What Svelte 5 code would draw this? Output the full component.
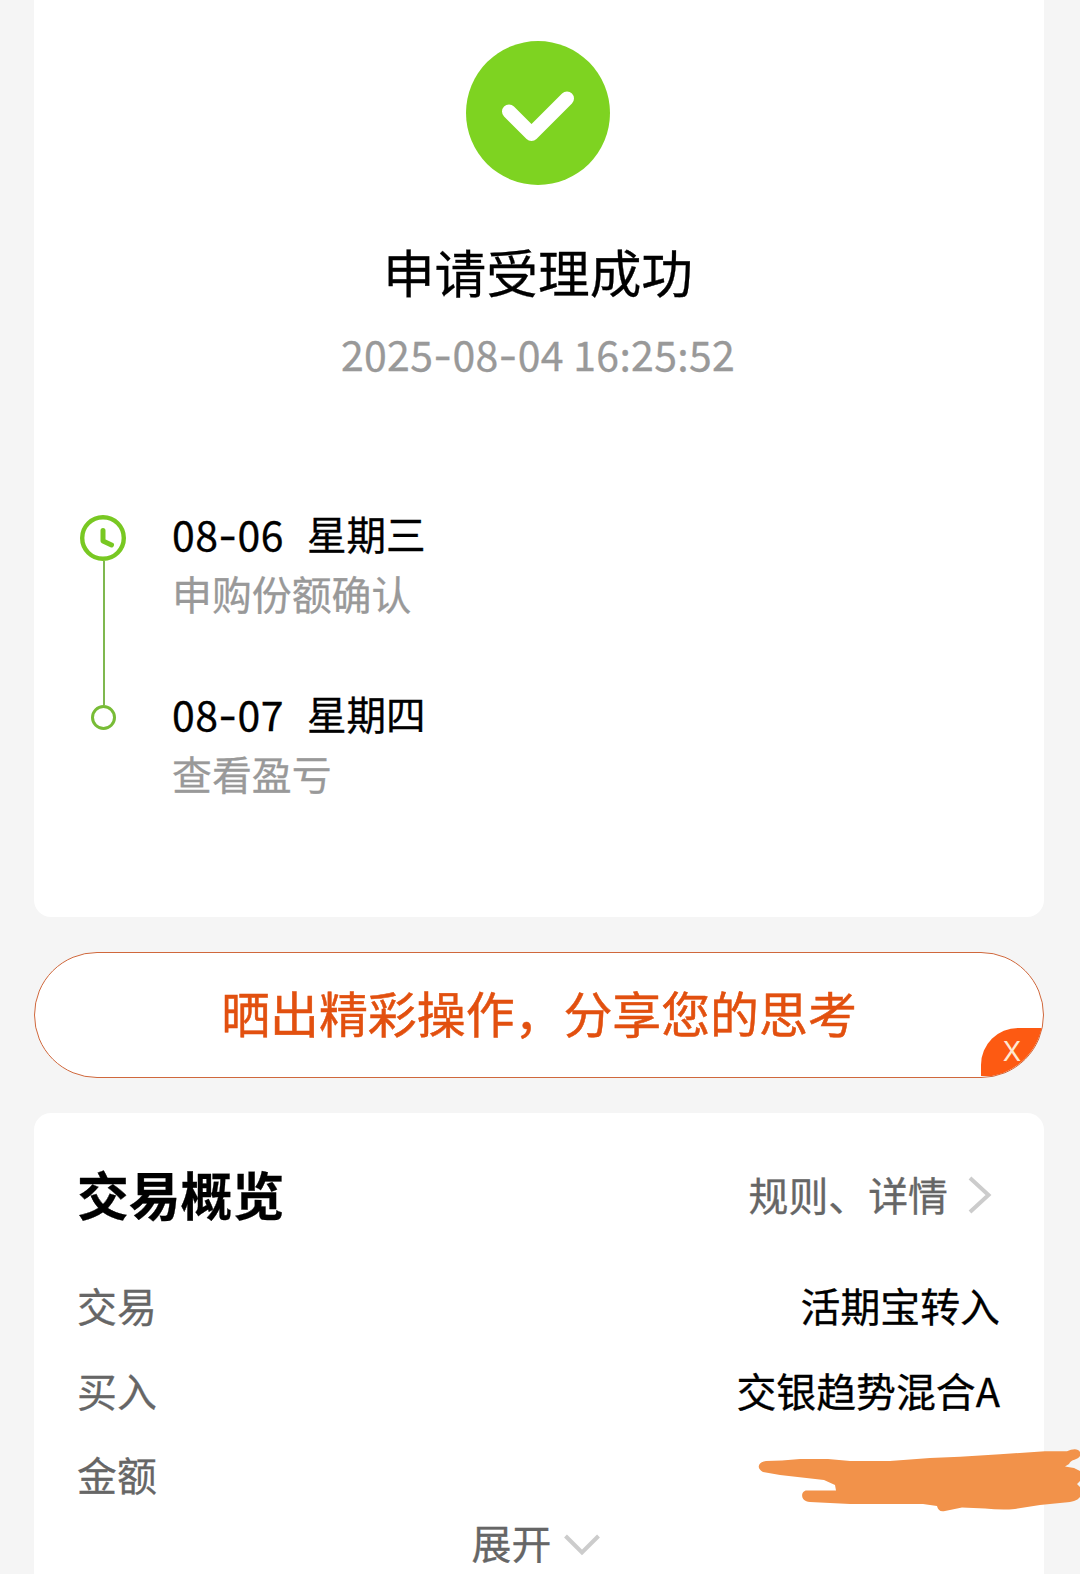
<script lang="ts">
	const result = {
		title: '申请受理成功',
		time: '2025-08-04 16:25:52'
	};

	const steps = [
		{ date: '08-06', day: '星期三', text: '申购份额确认' },
		{ date: '08-07', day: '星期四', text: '查看盈亏' }
	];

	const rows = [
		{ label: '交易', value: '活期宝转入' },
		{ label: '买入', value: '交银趋势混合A' },
		{ label: '金额', value: '' }
	];
</script>

{#snippet digits(value)}
	{#each value.split('-') as part, i}{#if i > 0}<span class="dash">-</span>{/if}{part}{/each}
{/snippet}

<div class="page">
	<section class="card result">
		<svg class="success" viewBox="0 0 144 144">
			<circle cx="72" cy="72" r="72" fill="#7ed321" />
			<path d="M43 70.5 65.500 93 101 57.500" fill="none" stroke="#fff" stroke-width="14" stroke-linecap="round" stroke-linejoin="round" />
		</svg>
		<h1>{result.title}</h1>
		<div class="time">{@render digits(result.time)}</div>

		<div class="timeline">
			<div class="rail">
				<svg class="clock" viewBox="0 0 46 46">
					<circle cx="23" cy="23" r="20.800" fill="none" stroke="#78c822" stroke-width="4.400" />
					<path d="M23 15.500V26L31.500 30" fill="none" stroke="#78c822" stroke-width="5" stroke-linecap="round" stroke-linejoin="round" />
				</svg>
				<div class="line"></div>
				<div class="dot"></div>
			</div>
			<div class="steps">
				{#each steps as step}
					<div class="step">
						<div class="when">
							<span class="date">{@render digits(step.date)}</span>
							<span>{step.day}</span>
						</div>
						<div class="what">{step.text}</div>
					</div>
				{/each}
			</div>
		</div>
	</section>

	<div class="share">
		<span>晒出精彩操作，分享您的思考</span>
		<div class="close">X</div>
	</div>

	<section class="card overview">
		<div class="head">
			<h2>交易概览</h2>
			<div class="more">
				<span>规则、详情</span>
				<svg width="24" height="38" viewBox="0 0 24 38">
					<path d="M2 2 20.500 19 2 36" fill="none" stroke="#ccc" stroke-width="4" />
				</svg>
			</div>
		</div>
		{#each rows as row}
			<div class="row">
				<span class="label">{row.label}</span>
				<span>{row.value}</span>
			</div>
		{/each}
		<div class="expand">
			<span>展开</span>
			<svg width="36" height="22" viewBox="0 0 36 22">
				<path d="M1.500 2 18 18.500 34.500 2" fill="none" stroke="#ccc" stroke-width="4" />
			</svg>
		</div>
	</section>

	<!-- marker stroke hiding the amount -->
	<svg class="scribble" viewBox="0 0 340 90">
		<path
			d="M26 31 42 30.500 60 29H88L110 31H150L190 28 220 26.700 260 24.300 305 21.300H327C332 19 338 18 340 22V26C338 30 331 29 329 34L325 36.500 334 38 340 41V51L337 54 340 57V67C337 71 332 72 325 72.500L300 75 275 79C265 80 255 79.500 245 78.500L222 77.500 205 81C200 82 198 80 197 76L183 74H110L70 72C59 71 61 60 67 60.500H96L95 55 84 50 40 45 23 42C16 38 18 32 26 31Z"
			fill="#f2924a"
		/>
	</svg>
</div>

<style>
	:global(body) {
		background: #f5f5f5;
		overflow: hidden;
	}
	.page {
		position: relative;
		box-sizing: border-box;
		width: 1080px;
		height: 1574px;
		padding: 0 36px 0 34px;
		overflow: hidden;
		background: #f5f5f5;
		color: #000;
		font-family: 'Noto Sans CJK SC', sans-serif;
		font-size: 39.9px;
		white-space: nowrap;
		-webkit-text-stroke: 0.3px;
	}
	.card {
		box-sizing: border-box;
		background: #fff;
	}
	.result {
		height: 917px;
		padding: 41px 48px 0 46px;
		border-radius: 0 0 17px 17px;
		display: flex;
		flex-direction: column;
		align-items: center;
	}
	.success {
		width: 144px;
		height: 144px;
		flex: none;
	}
	h1 {
		margin: 56px 0 0;
		font-size: 51.7px;
		font-weight: 400;
		line-height: 60px;
	}
	.time {
		margin-top: 27px;
		font-size: 41px;
		line-height: 50px;
		letter-spacing: 0.3px;
		color: #999;
	}
	.dash {
		font-family: Inter, sans-serif;
		line-height: 1;
	}
	.timeline {
		align-self: stretch;
		display: flex;
		gap: 46px;
		margin-top: 125px;
	}
	.rail {
		width: 46px;
		height: 215px;
		margin-top: 12px;
		display: flex;
		flex-direction: column;
		align-items: center;
	}
	.clock {
		width: 46px;
		height: 46px;
		flex: none;
	}
	.line {
		width: 2px;
		margin-left: 2px;
		flex: 1;
		background: #7fb84f;
	}
	.dot {
		box-sizing: border-box;
		width: 25px;
		height: 25px;
		border: 3px solid #78bc36;
		border-radius: 50%;
	}
	.steps {
		display: flex;
		flex-direction: column;
		gap: 60px;
	}
	.when {
		display: flex;
		gap: 23px;
		font-size: 39.6px;
		line-height: 60px;
	}
	.date {
		font-size: 41px;
		letter-spacing: 0.4px;
	}
	.what {
		line-height: 60px;
		color: #999;
	}
	.share {
		position: relative;
		box-sizing: border-box;
		height: 126px;
		margin: 35px 0;
		padding-bottom: 6px;
		border: 1px solid #d0683c;
		border-radius: 63px;
		overflow: hidden;
		background: #fff;
		color: #e2500f;
		display: flex;
		align-items: center;
		justify-content: center;
		font-size: 48.9px;
		line-height: 60px;
		-webkit-text-stroke: 0.5px;
	}
	.close {
		position: absolute;
		right: 0;
		bottom: 1px;
		width: 62px;
		height: 48px;
		border-radius: 37px 0 0 0;
		background: #fd5a12;
		color: #ffe9d2;
		font-family: Inter, sans-serif;
		font-size: 27px;
		line-height: 48px;
		text-align: center;
		-webkit-text-stroke: 0;
	}
	.overview {
		height: 480px;
		padding: 46px 44px 0 43px;
		border-radius: 17px 17px 0 0;
	}
	.head {
		height: 70px;
		margin-bottom: 34px;
		display: flex;
		align-items: center;
		justify-content: space-between;
	}
	h2 {
		margin: 0;
		font-size: 51.8px;
		font-weight: 700;
		line-height: 70px;
	}
	.more {
		display: flex;
		align-items: center;
		gap: 20px;
		padding-right: 8px;
		line-height: 70px;
		color: #666;
	}
	.more svg {
		margin-top: 2px;
	}
	.row {
		display: flex;
		justify-content: space-between;
		height: 84.7px;
		line-height: 84.7px;
	}
	.label {
		color: #666;
	}
	.expand {
		display: flex;
		align-items: center;
		justify-content: center;
		gap: 13px;
		padding-right: 5px;
		line-height: 50px;
		color: #666;
	}
	.expand svg {
		margin-top: 5px;
	}
	.scribble {
		position: absolute;
		left: 740px;
		top: 1430px;
		width: 340px;
		height: 90px;
	}
</style>
